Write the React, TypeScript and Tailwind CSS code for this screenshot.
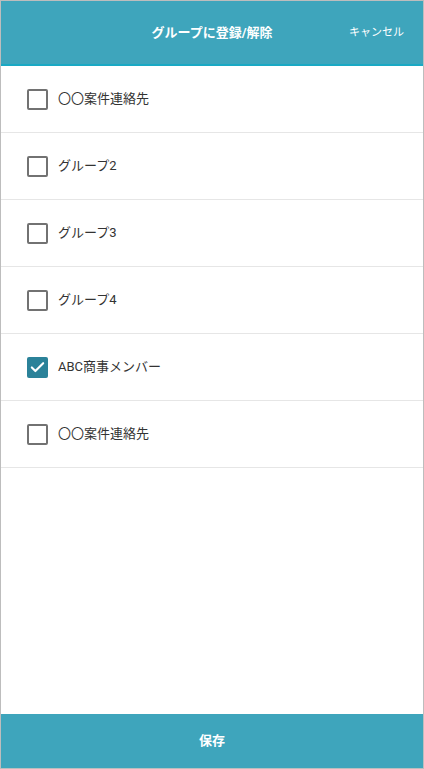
import { Check } from "lucide-react";

const groups = [
  { name: "〇〇案件連絡先", checked: false },
  { name: "グループ2", checked: false },
  { name: "グループ3", checked: false },
  { name: "グループ4", checked: false },
  { name: "ABC商事メンバー", checked: true },
  { name: "〇〇案件連絡先", checked: false },
];

const font = { fontFamily: '"Roboto", "Noto Sans CJK JP", sans-serif' };

export default function App() {
  return (
    <div
      className="flex h-[769px] w-[424px] flex-col border border-[#bdbdbd] bg-white"
      style={font}
    >
      <header className="relative flex h-[65px] shrink-0 items-center justify-center border-b-2 border-[#19a9c4] bg-[#3ea5bc]">
        <h1 className="text-[13px] font-bold text-white">グループに登録/解除</h1>
        <button className="absolute right-[19px] top-[24px] text-[11px] text-white">キャンセル</button>
      </header>

      <ul className="flex-1">
        {groups.map((g, i) => (
          <li
            key={i}
            className="flex h-[67px] items-center gap-[10px] border-b border-[#e6e6e6] pl-[26px]"
          >
            {g.checked ? (
              <span className="flex h-[21px] w-[21px] items-center justify-center rounded-[2px] bg-[#2b8299]">
                <Check className="h-[17px] w-[17px] text-white" strokeWidth={3} />
              </span>
            ) : (
              <span className="h-[21px] w-[21px] rounded-[2px] border-2 border-[#727272]" />
            )}
            <span className="text-[13px] text-[#333333]">{g.name}</span>
          </li>
        ))}
      </ul>

      <button className="flex h-[54px] shrink-0 items-center justify-center bg-[#3ea5bc] text-[13px] font-bold text-white">
        保存
      </button>
    </div>
  );
}
